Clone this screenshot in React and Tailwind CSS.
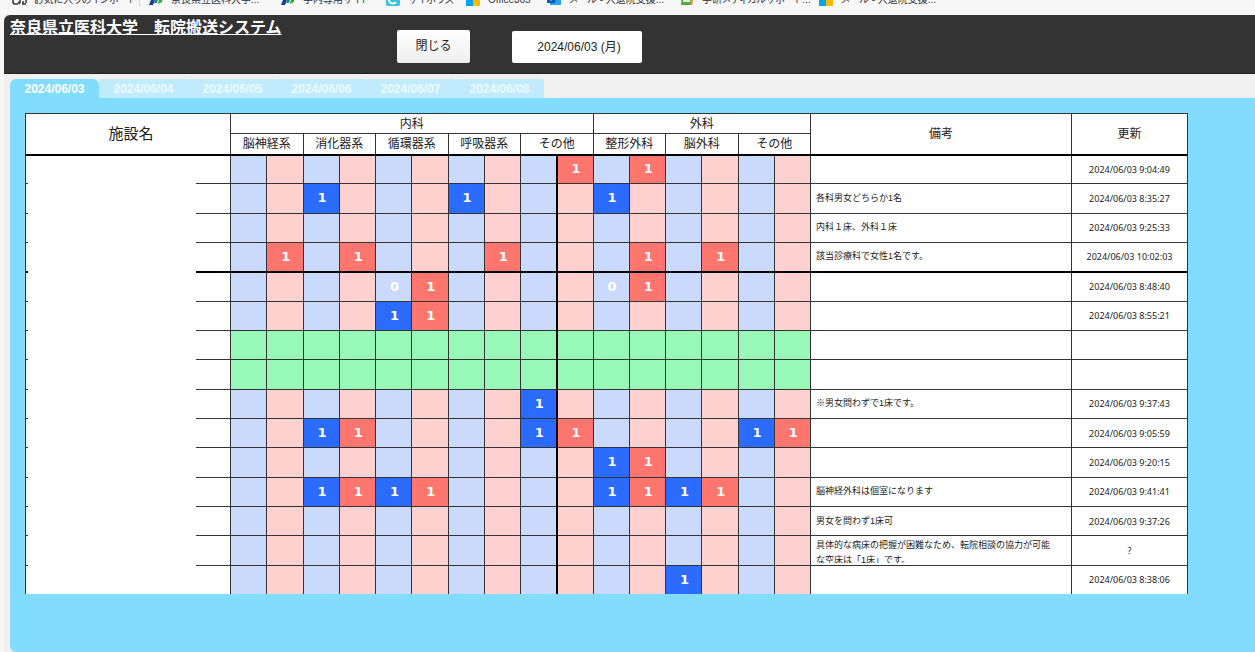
const bookmarks = [
  { icon: "import", label: "お気に入りのインポート", width: "w-[96px]" },
  { icon: "nmu", label: "奈良県立医科大学...", width: "w-[96px]" },
  { icon: "nmu", label: "学内専用サイト", width: "w-[69px]" },
  { icon: "cybozu", label: "サイボウズ", width: "w-[44px]" },
  { icon: "windows", label: "Office365", width: "w-[45px]" },
  { icon: "outlook", label: "メール - 入退院支援...", width: "w-[97px]" },
  { icon: "gakken", label: "学研メディカルサポート...", width: "w-[103px]" },
  { icon: "windows", label: "メール - 入退院支援...", width: "w-[98px]" },
];

const tabs = [
  "2024/06/03",
  "2024/06/04",
  "2024/06/05",
  "2024/06/06",
  "2024/06/07",
  "2024/06/08",
];

const departments = [
  { name: "内科", items: ["脳神経系", "消化器系", "循環器系", "呼吸器系", "その他"] },
  { name: "外科", items: ["整形外科", "脳外科", "その他"] },
];

// beds: column index (even = male, odd = female) -> number of beds
const rows = [
  { beds: { 9: 1, 11: 1 }, note: "", updated: "2024/06/03 9:04:49" },
  { beds: { 2: 1, 6: 1, 10: 1 }, note: "各科男女どちらか1名", updated: "2024/06/03 8:35:27" },
  { beds: {}, note: "内科１床、外科１床", updated: "2024/06/03 9:25:33" },
  {
    beds: { 1: 1, 3: 1, 7: 1, 11: 1, 13: 1 },
    note: "該当診療科で女性1名です。",
    updated: "2024/06/03 10:02:03",
    groupEnd: true,
  },
  { beds: { 4: 0, 5: 1, 10: 0, 11: 1 }, note: "", updated: "2024/06/03 8:48:40" },
  { beds: { 4: 1, 5: 1 }, note: "", updated: "2024/06/03 8:55:21" },
  { beds: {}, note: "", updated: "", pending: true },
  { beds: {}, note: "", updated: "", pending: true },
  { beds: { 8: 1 }, note: "※男女問わずで1床です。", updated: "2024/06/03 9:37:43" },
  { beds: { 2: 1, 3: 1, 8: 1, 9: 1, 14: 1, 15: 1 }, note: "", updated: "2024/06/03 9:05:59" },
  { beds: { 10: 1, 11: 1 }, note: "", updated: "2024/06/03 9:20:15" },
  {
    beds: { 2: 1, 3: 1, 4: 1, 5: 1, 10: 1, 11: 1, 12: 1, 13: 1 },
    note: "脳神経外科は個室になります",
    updated: "2024/06/03 9:41:41",
  },
  { beds: {}, note: "男女を問わず1床可", updated: "2024/06/03 9:37:26" },
  {
    beds: {},
    note: "具体的な病床の把握が困難なため、転院相談の協力が可能\nな空床は「1床」です。",
    updated: "?",
  },
  { beds: { 12: 1 }, note: "", updated: "2024/06/03 8:38:06" },
];

const columns = Array.from({ length: 16 }, (_, i) => i);

function cellColor(row, col) {
  if (row.pending) return "bg-[#98f8b8]";
  const male = col % 2 === 0;
  if (row.beds[col] > 0) return male ? "bg-[#2b6bff]" : "bg-[#ff766f]";
  return male ? "bg-[#cadafd]" : "bg-[#fed0d0]";
}

function BookmarkIcon({ name }) {
  return (
    <svg viewBox="0 0 16 16" className="size-4 shrink-0" aria-hidden="true">
      {name === "import" && (
        <g fill="none" stroke="#333" strokeWidth="1.5">
          <path d="M2 3v9a2 2 0 0 0 2 2h3M9 10v3M7 12l2 2M11 14h4M12 11v3M15 10v3" />
        </g>
      )}
      {name === "nmu" && (
        <g>
          <path d="M1 15 6 2h4L5 15z" fill="#1d3f8f" />
          <path d="M6 13 9 3h3L9 13z" fill="#1a8f90" />
          <path d="M10 14 12 4h3l-1 8z" fill="#35a545" />
        </g>
      )}
      {name === "cybozu" && (
        <g>
          <rect x="1" y="1" width="14" height="15" rx="2" fill="#35c2e0" />
          <path d="M11 7a4 4 0 1 0 0 5" fill="none" stroke="#fff" strokeWidth="2" />
        </g>
      )}
      {name === "windows" && (
        <g>
          <path d="M1 1h7v7H1z" fill="#f25022" />
          <path d="M8 1h7v7H8z" fill="#7fba00" />
          <path d="M1 8h7v8H1z" fill="#00a4ef" />
          <path d="M8 8h7v8H8z" fill="#ffb900" />
        </g>
      )}
      {name === "outlook" && (
        <g>
          <path d="M4 1h11v14H4z" fill="#1490df" />
          <path d="m4 15 11-7v7z" fill="#28a8ea" />
          <rect x="1" y="4" width="8" height="9" fill="#0f5cb8" />
          <circle cx="5" cy="8" r="2" fill="none" stroke="#fff" />
        </g>
      )}
      {name === "gakken" && (
        <g>
          <path d="M3 2h11l-1 13H2z" fill="#4cab3c" />
          <path d="M5 4h7l-1 8H4z" fill="#e9f5d8" />
          <path d="m12 11 2-3v6l-3 1z" fill="#e0a060" />
        </g>
      )}
    </svg>
  );
}

function BookmarksBar() {
  return (
    <nav className="h-[15px] overflow-hidden bg-[#f7f7f7] pl-[11px]" aria-label="お気に入り">
      <ul className="-mt-[10px] flex h-4 items-end text-[10px] leading-3 text-[#333] [font-feature-settings:'palt']">
        {bookmarks.map((item, i) => (
          <li
            key={i}
            className={
              i === 0 ? "mr-2 flex items-end border-r border-gray-300 pr-[9px]" : "mr-[13px] flex items-end"
            }
          >
            <a href="#" className="flex items-end gap-[7px]">
              <BookmarkIcon name={item.icon} />
              <span className={`${item.width} whitespace-nowrap`}>{item.label}</span>
            </a>
          </li>
        ))}
      </ul>
    </nav>
  );
}

function Header() {
  return (
    <header className="flex h-[59px] items-start rounded-tl-md border-b border-[#222] bg-[#333] pl-[6px]">
      <h1 className="mt-px w-[387px] text-[16px] leading-6 font-bold text-white underline">
        奈良県立医科大学　転院搬送システム
      </h1>
      <button
        type="button"
        className="mt-[15px] h-[33px] w-[73px] rounded-xs bg-linear-to-b from-white to-[#eee] pb-0.5 text-[12px] text-[#222]"
      >
        閉じる
      </button>
      <input
        type="text"
        readOnly
        aria-label="日付"
        value="2024/06/03 (月)"
        className="mt-4 ml-[42px] h-8 w-[130px] rounded-xs bg-white pb-1 pl-1 text-center text-[12px] text-[#222]"
      />
    </header>
  );
}

function DateTabs() {
  return (
    <div role="tablist" className="flex">
      {tabs.map((date, i) => (
        <button
          key={date}
          type="button"
          role="tab"
          aria-selected={i === 0}
          className={
            i === 0
              ? "h-[19px] w-[89px] rounded-t-md bg-[#82dcfd] text-[12px] leading-4 font-bold text-white"
              : "h-[19px] w-[89px] rounded-t-xs bg-[#c0ebfd] text-[12px] leading-4 font-bold text-[#ecfaff]"
          }
        >
          {date}
        </button>
      ))}
    </div>
  );
}

function BedTable() {
  return (
    <table className="h-[482px] w-full table-fixed border-collapse bg-white text-[#222]">
      <colgroup>
        <col className="w-[205px]" />
        {columns.map((col) => (
          <col key={col} />
        ))}
        <col className="w-[261px]" />
        <col className="w-[116px]" />
      </colgroup>
      <thead className="border-b-2 border-black text-[12px] leading-4">
        <tr className="h-5">
          <th rowSpan={2} className="border border-[#333] pl-1.5 text-[15px] font-normal">
            施設名
          </th>
          {departments.map((dept) => (
            <th key={dept.name} colSpan={dept.items.length * 2} className="border border-[#333] font-normal">
              {dept.name}
            </th>
          ))}
          <th rowSpan={2} className="border border-[#333] font-normal">
            備考
          </th>
          <th rowSpan={2} className="border border-[#333] font-normal">
            更新
          </th>
        </tr>
        <tr className="h-[21px]">
          {departments.map((dept) =>
            dept.items.map((item) => (
              <th key={dept.name + item} colSpan={2} className="border border-[#333] font-normal">
                {item}
              </th>
            ))
          )}
        </tr>
      </thead>
      <tbody>
        {rows.map((row, i) => (
          <tr key={i} className={row.groupEnd ? "h-[29px] border-b-2 border-black" : "h-[29px]"}>
            <td className="relative border border-[#333]">
              {/* facility name is masked */}
              <div className="absolute top-0 -bottom-0.5 left-0.5 w-[168px] bg-white" />
            </td>
            {columns.map((col) => (
              <td
                key={col}
                className={`border border-[#333] pl-0.5 text-center font-[Verdana,'DejaVu_Sans',sans-serif] text-[13px] leading-4 font-bold text-white ${
                  col === 9 ? "border-l-2 border-l-black" : ""
                } ${cellColor(row, col)}`}
              >
                {row.beds[col]}
              </td>
            ))}
            <td className="border border-[#333] px-[5px]">
              <div className="max-h-[25px] overflow-hidden text-[9px] leading-[15px] whitespace-pre-line">
                {row.note}
              </div>
            </td>
            <td className="border border-[#333] text-center font-['Noto_Sans',sans-serif] text-[9px] leading-[15px]">
              {row.updated}
            </td>
          </tr>
        ))}
      </tbody>
    </table>
  );
}

export default function App() {
  return (
    <div className="flex h-screen flex-col overflow-hidden bg-[#f7f7f7] font-['Liberation_Sans','Noto_Sans_CJK_JP',sans-serif]">
      <BookmarksBar />
      <div className="ml-1 flex grow flex-col bg-[#f0f0f0]">
        <Header />
        <main className="flex grow flex-col pt-[5px] pl-[6px]">
          <DateTabs />
          <div className="grow rounded-bl-md bg-[#82dcfd] pt-[15px] pr-4 pl-[15px]">
            <div className="h-[481px] w-full max-w-[1163px] overflow-hidden">
              <BedTable />
            </div>
          </div>
        </main>
      </div>
    </div>
  );
}
